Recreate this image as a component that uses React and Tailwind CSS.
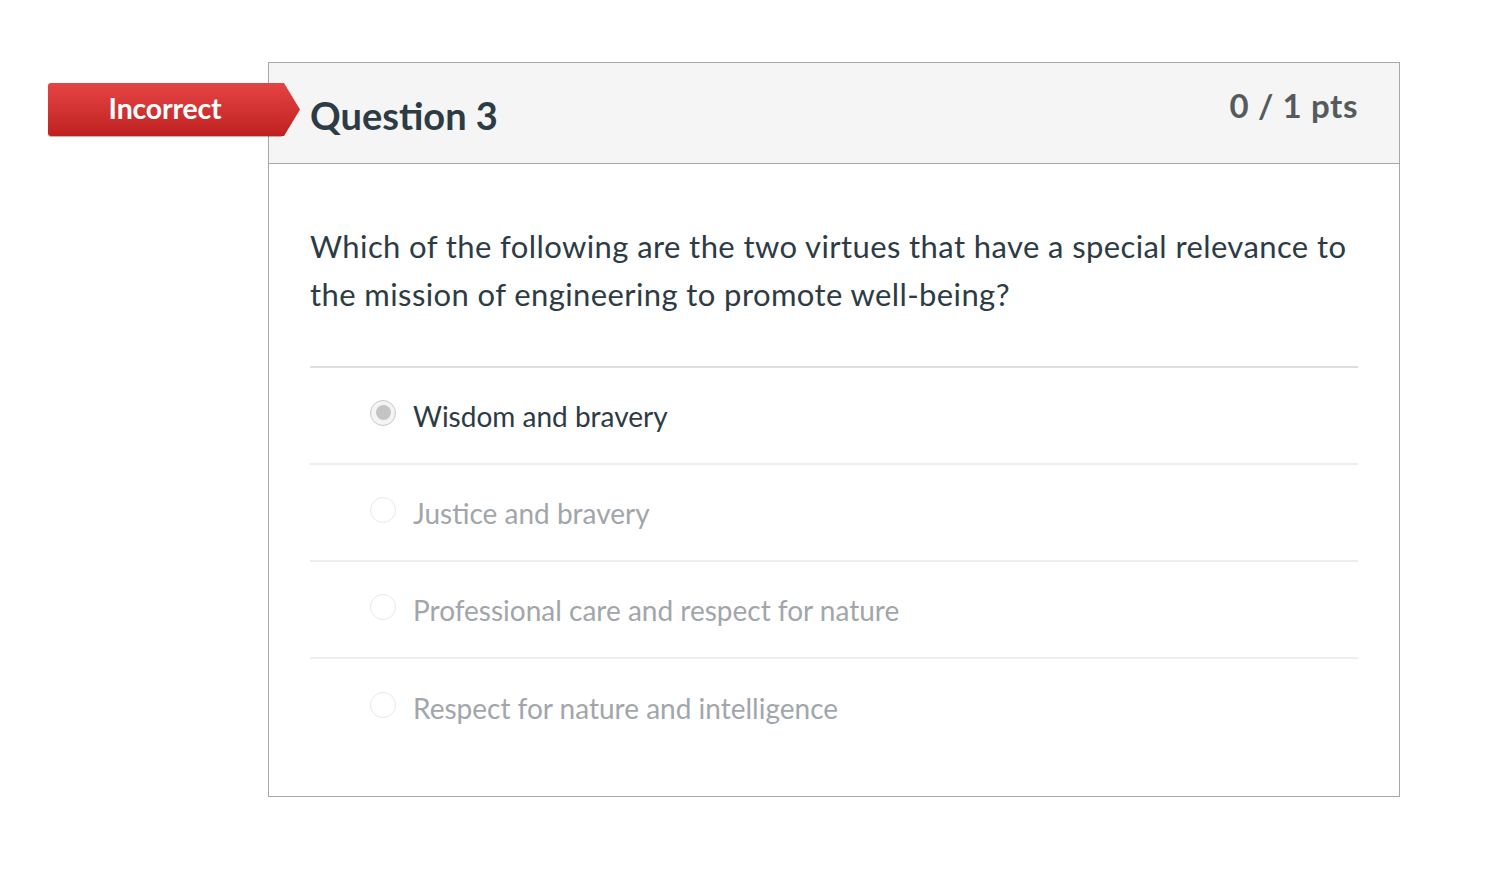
import React from 'react'

const answers = [
  { id: 1, text: 'Wisdom and bravery', selected: true },
  { id: 2, text: 'Justice and bravery' },
  { id: 3, text: 'Professional care and respect for nature' },
  { id: 4, text: 'Respect for nature and intelligence' },
]

const Radio = ({ selected }) => (
  <div className={`w-[26px] h-[26px] rounded-full border flex items-center justify-center shrink-0 ${selected ? 'border-[#c9c9c9] bg-[#f4f4f4]' : 'border-[#e8e8e8] bg-white'}`}>
    {selected && <div className="w-[15px] h-[15px] rounded-full bg-[#c4c4c4]" />}
  </div>
)

const App = () => {
  return (
    <div className="w-[1500px] h-[870px] bg-white font-['Lato','Open_Sans',sans-serif] pt-[62px] pl-[268px]">
      <div className="relative w-[1132px] border border-[#a8a8a8]">
        {/* incorrect flag */}
        <div className="absolute left-[-221px] top-[20px] flex items-center">
          <div className="w-[234px] h-[53px] rounded-l-[3px] bg-gradient-to-b from-[#e54444] to-[#bf2020] flex items-center justify-center shadow-[0_1px_1px_rgba(0,0,0,0.3)]">
            <span className="text-white font-bold text-[28.5px] tracking-[-0.2px] -mt-[3px]">Incorrect</span>
          </div>
          <svg width="19" height="53" viewBox="0 0 19 53" className="-ml-px">
            <defs>
              <linearGradient id="flag" x1="0" y1="0" x2="0" y2="1">
                <stop offset="0" stopColor="#e54444" />
                <stop offset="1" stopColor="#bf2020" />
              </linearGradient>
            </defs>
            <polygon points="0,0 3,0 19,26.5 3,53 0,53" fill="url(#flag)" />
          </svg>
        </div>

        <div className="h-[101px] bg-[#f5f5f5] border-b border-[#a8a8a8] flex items-start justify-between px-[41px]">
          <h2 className="text-[38px] font-bold text-[#2d3b45] mt-[29px] leading-[46px]">Question 3</h2>
          <span className="text-[33px] tracking-[0.6px] font-bold text-[#555a5e] mt-[22px] leading-[40px]">0 / 1 pts</span>
        </div>

        <div className="px-[41px] pt-[58px] pb-[40px]">
          <p className="text-[31px] tracking-[0.4px] leading-[48px] text-[#2d3b45]">
            Which of the following are the two virtues that have a special relevance to the mission of engineering to promote well-being?
          </p>
          <div className="mt-[48px] border-t-2 border-[#dedede]">
            {answers.map((a, i) => (
              <div key={a.id} className={`h-[97px] flex items-center pl-[60px] gap-[17px] ${i < answers.length - 1 ? 'border-b-2 border-[#eeeeee]' : ''}`}>
                <div className="-mt-[6px]"><Radio selected={a.selected} /></div>
                <span className={`text-[28px] ${a.selected ? 'text-[#2d3b45]' : 'text-[#a2a6aa]'}`}>{a.text}</span>
              </div>
            ))}
          </div>
        </div>
      </div>
    </div>
  )
}

export default App
